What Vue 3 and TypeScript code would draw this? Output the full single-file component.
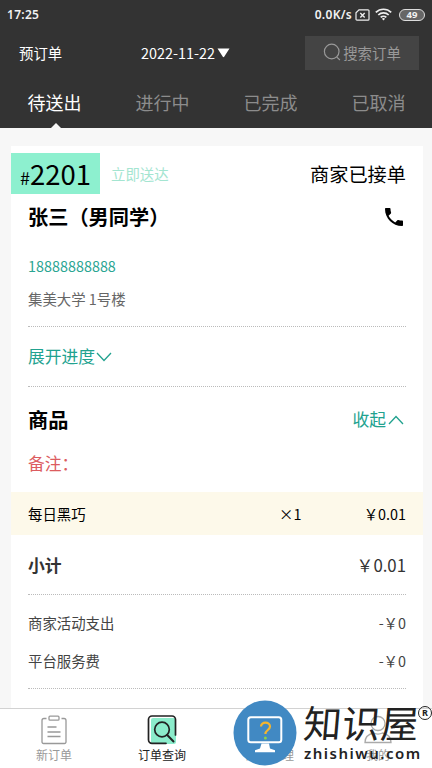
<script setup lang="ts">
import { ref } from 'vue'

interface Fee {
  label: string
  amount: string
}

const statusTabs: string[] = ['待送出', '进行中', '已完成', '已取消']
const activeTab = ref<number>(0)

const fees: Fee[] = [
  { label: '商家活动支出', amount: '-￥0' },
  { label: '平台服务费', amount: '-￥0' },
]
</script>

<template>
  <div class="screen">
    <header class="header">
      <div class="status">
        <span class="clock">17:25</span>
        <span class="speed">0.0K/s</span>
        <svg class="sim" width="15" height="12" viewBox="0 0 15 12">
          <path d="M4 .8h9a1 1 0 0 1 1 1v8.4a1 1 0 0 1-1 1H2a1 1 0 0 1-1-1V3.8z" fill="none" stroke="#eee" stroke-width="1.2" />
          <path d="M5.3 4l4.4 4.4M9.7 4L5.3 8.4" stroke="#eee" stroke-width="1.4" />
        </svg>
        <svg class="wifi" width="17" height="13" viewBox="0 0 17 13">
          <g fill="none" stroke="#eee" stroke-width="1.7">
            <path d="M.8 4.4a11 11 0 0 1 15.4 0" />
            <path d="M3.3 7a7.4 7.4 0 0 1 10.4 0" />
            <path d="M5.7 9.4a4 4 0 0 1 5.6 0" />
          </g>
          <path d="M6.9 10.8a2.3 2.3 0 0 1 3.2 0L8.5 12.6z" fill="#eee" />
        </svg>
        <span class="battery">49</span>
      </div>
      <div class="toolbar">
        <span class="preorder">预订单</span>
        <span class="date">2022-11-22<svg width="13" height="10" viewBox="0 0 13 10"><path d="M.5.5h12L7.2 8.8a.8.8 0 0 1-1.4 0z" fill="#fff" /></svg></span>
        <div class="search">
          <svg width="19" height="19" viewBox="0 0 19 19" fill="none" stroke="#999" stroke-width="1.2">
            <circle cx="8.7" cy="8.5" r="7.3" />
            <path d="M13.6 13.9l3.3 3.1" />
          </svg>
          <span>搜索订单</span>
        </div>
      </div>
      <nav class="tabs">
        <span v-for="(tab, i) in statusTabs" :key="tab" class="tab" :class="{ active: i === activeTab }" @click="activeTab = i">{{ tab }}</span>
      </nav>
    </header>

    <main class="card">
      <div class="order-head">
        <div class="number"><small>#</small>2201</div>
        <span class="delivery">立即送达</span>
        <span class="state">商家已接单</span>
      </div>
      <section class="body">
        <div class="row name">
          <span>张三（男同学）</span>
          <svg width="24" height="24" viewBox="0 0 24 24"><path d="M6.6 10.8c1.4 2.8 3.8 5.1 6.6 6.6l2.2-2.2c.3-.3.7-.4 1-.2 1.1.4 2.3.6 3.6.6.6 0 1 .4 1 1V20c0 .6-.4 1-1 1C10.6 21 3 13.4 3 4c0-.6.4-1 1-1h3.5c.6 0 1 .4 1 1 0 1.3.2 2.5.6 3.6.1.3 0 .7-.2 1z" /></svg>
        </div>
        <div class="row phone">18888888888</div>
        <div class="row address">集美大学 1号楼</div>
        <div class="row link progress">
          <span>展开进度<svg width="16" height="10" viewBox="0 0 16 10"><path d="M1 1l7 7.5L15 1" /></svg></span>
        </div>
        <div class="row goods">
          <span class="title">商品</span>
          <span class="link">收起<svg width="16" height="10" viewBox="0 0 16 10"><path d="M1 9l7-7.5L15 9" /></svg></span>
        </div>
        <div class="row remark">备注：</div>
      </section>
      <div class="item">
        <span class="item-name">每日黑巧</span>
        <span class="qty">×1</span>
        <span class="price">￥0.01</span>
      </div>
      <section class="body">
        <div class="row subtotal">
          <span class="label">小计</span>
          <span>￥0.01</span>
        </div>
        <div class="fees">
          <div v-for="fee in fees" :key="fee.label" class="row fee">
            <span>{{ fee.label }}</span>
            <span>{{ fee.amount }}</span>
          </div>
        </div>
      </section>
    </main>

    <footer class="tabbar">
      <div class="nav">
        <svg width="32" height="32" viewBox="0 0 32 32" fill="none" stroke="#999" stroke-width="1.3">
          <path d="M8.5 4.5H6a2 2 0 0 0-2 2V28a1.5 1.5 0 0 0 1.5 1.5h21A1.5 1.5 0 0 0 28 28V6.5a2 2 0 0 0-2-2h-2.5" />
          <rect x="11" y="2.2" width="10" height="4" rx="1" />
          <path d="M9.5 13h9M9.5 18h13M9.5 22.5h13" />
        </svg>
        <span>新订单</span>
      </div>
      <div class="nav current">
        <svg width="32" height="32" viewBox="0 0 32 32" fill="none">
          <rect x="5" y="4" width="25" height="26" rx="2" fill="#8beccb" />
          <g stroke="#222" stroke-width="1.7" stroke-linecap="round">
            <path d="M20 29.3H6a3.5 3.5 0 0 1-3.5-3.5V5.5A3.5 3.5 0 0 1 6 2h20a3.5 3.5 0 0 1 3.5 3.5V21" />
            <circle cx="16" cy="15.5" r="7.3" />
            <path d="M21.2 21l6.3 6.5" stroke-width="2" />
          </g>
        </svg>
        <span>订单查询</span>
      </div>
      <div class="nav"><span class="alone">店铺管理</span></div>
      <div class="nav">
        <svg width="32" height="32" viewBox="0 0 32 32" fill="none" stroke="#aaa" stroke-width="1.3">
          <circle cx="16" cy="9.5" r="7" />
          <path d="M3 28.5c0-6 4-8.5 8.5-9.5 3 1.4 6 1.4 9 0 4.5 1 8.5 3.5 8.5 9.5z" />
        </svg>
        <span>我的</span>
      </div>
    </footer>

    <div class="mark">
      <svg class="logo" width="64" height="66" viewBox="0 0 64 66">
        <ellipse cx="32" cy="33" rx="31.5" ry="32.5" fill="#4189c3" />
        <rect x="15.3" y="17.3" width="33" height="25" rx="2.5" fill="none" stroke="#fff" stroke-width="2" />
        <path d="M28.5 43.5H36l1 5 5 1.7v2H22v-2l5-1.7z" fill="#fff" />
        <path d="M28 26.5c0-5.3 9-5 9 0 0 3.5-4.6 3.6-4.6 7.5" fill="none" stroke="#f5b52e" stroke-width="2.2" />
        <circle cx="32.4" cy="37.9" r="1.5" fill="#8cd04b" />
      </svg>
      <div class="words">
        <span class="cn">知识屋</span>
        <span class="en">zhishiwu.com</span>
      </div>
      <span class="reg">R</span>
    </div>
  </div>
</template>

<style>
body {
  margin: 0;
  overflow: hidden;
}
</style>

<style scoped>
.screen {
  position: relative;
  box-sizing: border-box;
  width: 432px;
  height: 768px;
  overflow: hidden;
  display: flex;
  flex-direction: column;
  background: #f7f7f7;
  color: #000;
  font-family: "Noto Sans CJK SC", sans-serif;
  font-size: 14.4px;
}
svg {
  flex: none;
}
.header {
  height: 128px;
  flex: none;
  background: #333;
  color: #fff;
}
.status {
  height: 29px;
  display: flex;
  align-items: center;
  padding: 0 7px;
  font: 600 12px/29px "Noto Sans", sans-serif;
  color: #f2f2f2;
}
.clock {
  flex: 1;
  letter-spacing: 0.3px;
}
.speed {
  letter-spacing: 0.3px;
  margin-right: 3px;
}
.wifi {
  margin: 0 7px 0 5px;
}
.battery {
  box-sizing: border-box;
  width: 26px;
  height: 12px;
  border: 1.5px solid #ddd;
  border-radius: 6px;
  background: #666;
  font-size: 9.5px;
  font-weight: 700;
  line-height: 10px;
  text-align: center;
}
.toolbar {
  box-sizing: border-box;
  height: 48px;
  display: flex;
  align-items: center;
  padding: 0 13px 0 19px;
}
.preorder {
  width: 122px;
  padding-bottom: 2px;
}
.date {
  flex: 1;
  padding-bottom: 2px;
}
.date svg {
  margin: 0 0 1px 2px;
}
.search {
  width: 114px;
  height: 34px;
  line-height: 32px;
  display: flex;
  align-items: center;
  justify-content: center;
  gap: 1px;
  background: #444;
  color: #999;
}
.search svg {
  margin-bottom: 1px;
}
.tabs {
  display: grid;
  grid-template-columns: repeat(4, 1fr);
  height: 51px;
}
.tab {
  display: flex;
  flex-direction: column;
  align-items: center;
  height: 51px;
  padding-left: 1px;
  font-size: 18px;
  line-height: 51px;
  color: #8c8c8c;
}
.tab.active {
  color: #fff;
}
.tab.active::after {
  content: "";
  width: 10px;
  height: 5px;
  margin: -5px 0 0 3px;
  flex: none;
  background: #f7f7f7;
  clip-path: polygon(50% 0, 100% 100%, 0 100%);
}
.card {
  flex: 1;
  min-height: 0;
  margin: 18px 9px 0 11px;
  padding-top: 7px;
  background: #fff;
  overflow: hidden;
}
.order-head {
  height: 41px;
  display: flex;
  align-items: center;
  padding-right: 17px;
}
.number {
  width: 89px;
  height: 41px;
  box-sizing: border-box;
  padding-left: 9px;
  background: #8df0cf;
  font-size: 27.5px;
  line-height: 41px;
  white-space: nowrap;
}
.number small {
  font-size: 18px;
}
.delivery {
  flex: 1;
  margin-left: 11px;
  color: #a4e5d1;
}
.state {
  font-size: 19.2px;
}
.body {
  padding: 0 17px;
}
.row {
  display: flex;
  align-items: center;
  justify-content: space-between;
}
.name {
  height: 46px;
  font-size: 20.2px;
  line-height: 46px;
  font-weight: 700;
}
.phone {
  height: 51px;
  color: #2aa592;
}
.address {
  height: 15px;
  line-height: 15px;
  padding-bottom: 20px;
  color: #666;
}
.progress {
  height: 59px;
  border-top: 1px dotted #bbb;
  border-bottom: 1px dotted #bbb;
}
.progress span {
  padding-bottom: 2px;
}
.link {
  font-size: 16.8px;
  color: #21a28f;
}
.link svg {
  margin-left: 1px;
  fill: none;
  stroke: #21a28f;
  stroke-width: 1.3;
}
.progress svg {
  margin-bottom: 1px;
}
.goods {
  height: 64px;
  padding-right: 1px;
}
.goods .link svg {
  margin: 0 1px 1px 2px;
}
.title {
  font-size: 20.2px;
  font-weight: 700;
}
.remark {
  height: 24px;
  padding-bottom: 17px;
  font-size: 16.8px;
  line-height: 24px;
  color: #dc5c60;
}
.item {
  height: 43px;
  display: flex;
  align-items: center;
  padding: 0 17px;
  background: #fdf9ea;
}
.item-name {
  width: 251px;
}
.qty {
  flex: 1;
}
.subtotal {
  height: 59px;
  border-bottom: 1px dotted #bbb;
  font-size: 16.8px;
  color: #333;
}
.subtotal .label {
  font-weight: 700;
}
.fees {
  padding: 8px 0 9px;
  border-bottom: 1px dotted #bbb;
}
.fee {
  height: 38px;
  color: #444;
}
.tabbar {
  height: 59px;
  flex: none;
  display: grid;
  grid-template-columns: repeat(4, 1fr);
  border-top: 1px solid #d2d2d2;
  background: #fff;
}
.nav {
  display: flex;
  flex-direction: column;
  align-items: center;
  padding-top: 5px;
  font-size: 12px;
  line-height: 17px;
  color: #999;
}
.nav.current {
  color: #222;
}
.alone {
  margin-top: 32px;
}
.mark {
  position: absolute;
  left: 233px;
  top: 700px;
  display: flex;
}
.words {
  display: flex;
  flex-direction: column;
  margin-left: 7px;
  color: #222;
}
.cn {
  font-size: 38px;
  font-weight: 400;
  line-height: 44px;
  height: 44px;
  white-space: nowrap;
  letter-spacing: 0.5px;
  transform: skewX(-5deg);
}
.en {
  font: 600 15px/18px "Noto Sans", sans-serif;
  letter-spacing: 1.5px;
}
.reg {
  position: absolute;
  left: 185px;
  top: 6px;
  box-sizing: border-box;
  width: 14px;
  height: 14px;
  border: 1.5px solid #222;
  border-radius: 50%;
  font: 700 9px/12px "Noto Sans", sans-serif;
  text-align: center;
  color: #222;
}
</style>
